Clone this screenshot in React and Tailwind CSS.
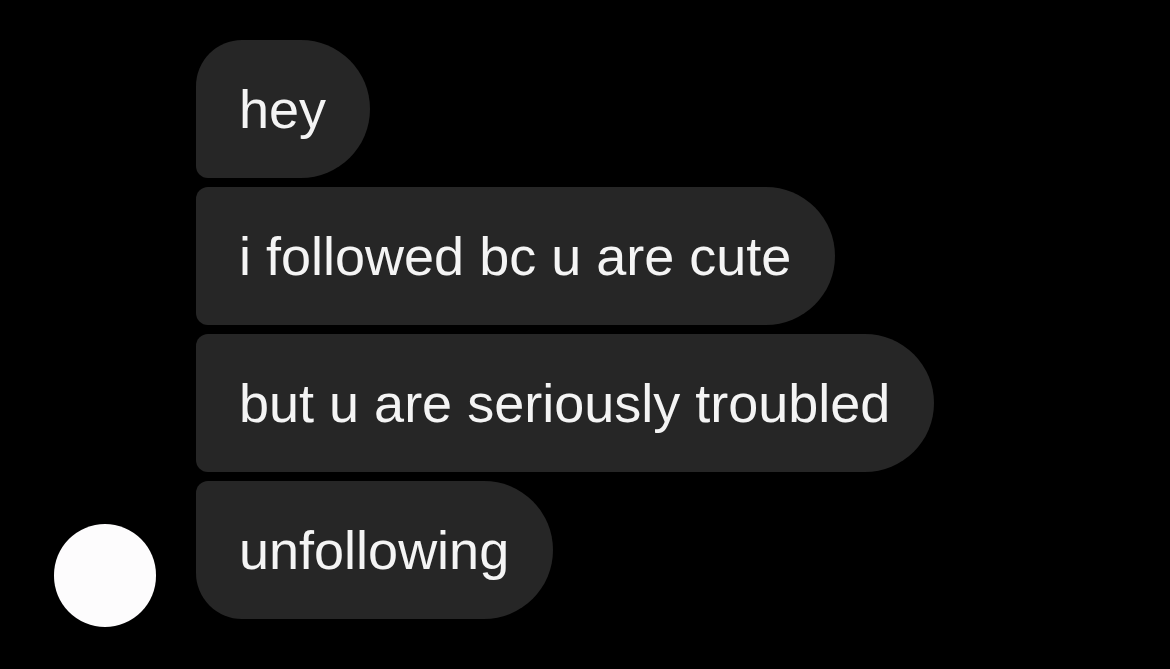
import React from "react";

const messages = [
  { text: "hey", shape: "rounded-tl-[46px] rounded-bl-[12px]" },
  { text: "i followed bc u are cute", shape: "rounded-l-[12px]" },
  { text: "but u are seriously troubled", shape: "rounded-l-[12px]" },
  { text: "unfollowing", shape: "rounded-tl-[12px] rounded-bl-[46px]" },
];

const Bubble = ({ text, shape }) => (
  <div
    className={`flex h-[138px] items-center self-start rounded-r-[69px] bg-[#262626] pl-[43px] pr-[44px] ${shape}`}
  >
    <span className="text-[54px] leading-none text-[#f4f4f4]">{text}</span>
  </div>
);

const App = () => {
  return (
    <div
      className="h-[669px] w-[1170px] overflow-hidden bg-black pt-[40px] pl-[54px]"
      style={{ fontFamily: '"Liberation Sans", Arial, sans-serif' }}
    >
      <div className="flex items-end gap-[40px]">
        {/* avatar */}
        <div className="mb-[-8px] h-[103px] w-[102px] shrink-0 rounded-full bg-[#fdfcfd]" />
        <div className="flex flex-col gap-[9px]">
          {messages.map((m) => (
            <Bubble key={m.text} text={m.text} shape={m.shape} />
          ))}
        </div>
      </div>
    </div>
  );
};

export default App;
